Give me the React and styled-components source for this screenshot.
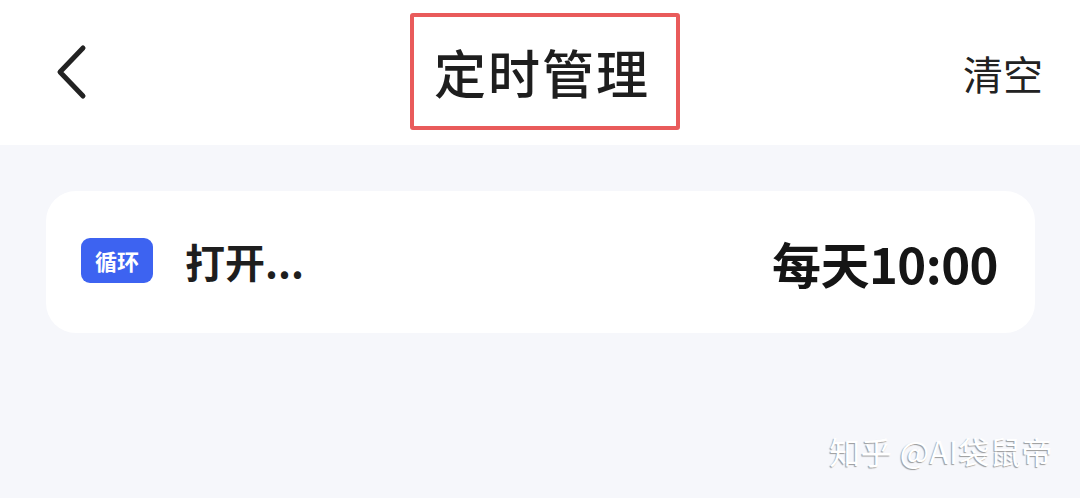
import React from "react";
import styled, { createGlobalStyle } from "styled-components";

const Global = createGlobalStyle`
  html, body { margin: 0; padding: 0; }
  body {
    width: 1080px;
    height: 498px;
    overflow: hidden;
    background: #f6f7fb;
    font-family: "Noto Sans CJK SC", "Noto Sans", sans-serif;
    color: #1f1f1f;
  }
`;

const Page = styled.div`
  position: relative;
  width: 1080px;
  height: 498px;
  background: #f6f7fb;
`;

const Header = styled.header`
  height: 145px;
  background: #fff;
  display: grid;
  grid-template-columns: 1fr auto 1fr;
  align-items: center;
  padding: 0 37px 0 55px;
  box-sizing: border-box;
`;

const Back = styled.button`
  justify-self: start;
  border: 0;
  background: none;
  padding: 0;
  display: flex;
  margin-top: -2px;
`;

const TitleBox = styled.div`
  width: 270px;
  height: 117px;
  box-sizing: border-box;
  border: 4px solid #e95b5b;
  border-radius: 3px;
  display: flex;
  align-items: center;
  padding-left: 20px;
  margin-top: -3px;
  margin-left: -8px;
`;

const Title = styled.h1`
  margin: 0;
  font-size: 52px;
  font-weight: 500;
  letter-spacing: 2px;
  color: #1e1e1e;
  line-height: 1;
  padding-top: 2px;
`;

const Clear = styled.span`
  justify-self: end;
  font-size: 40px;
  color: #222;
  line-height: 1;
`;

const Body = styled.main`
  padding: 46px 45px 0 46px;
`;

const Card = styled.div`
  height: 142px;
  background: #fff;
  border-radius: 30px;
  display: flex;
  align-items: center;
  padding: 0 37px 0 35px;
  box-sizing: border-box;
`;

const Badge = styled.span`
  width: 72px;
  height: 45px;
  border-radius: 9px;
  background: #3d63f1;
  color: #fff;
  font-size: 22px;
  font-weight: 700;
  display: flex;
  align-items: center;
  justify-content: center;
  margin-top: -4px;
`;

const Name = styled.span`
  margin-left: 32px;
  font-size: 40px;
  font-weight: 700;
  color: #1e1e1e;
  margin-top: -2px;
`;

const Time = styled.span`
  margin-left: auto;
  font-size: 49px;
  font-weight: 700;
  color: #151515;
  letter-spacing: -0.5px;
`;

const Watermark = styled.div`
  position: absolute;
  right: 27px;
  bottom: 25px;
  font-size: 31px;
  color: #fff;
  text-shadow: -1px 1px 1px #9a9a9a;
  letter-spacing: 0.5px;
`;

export default function App() {
  return (
    <Page>
      <Global />
      <Header>
        <Back aria-label="返回">
          <svg width="34" height="56" viewBox="0 0 34 56">
            <path
              d="M28 4 L5 28 L28 52"
              fill="none"
              stroke="#222"
              strokeWidth="5"
              strokeLinecap="round"
              strokeLinejoin="round"
            />
          </svg>
        </Back>
        <TitleBox>
          <Title>定时管理</Title>
        </TitleBox>
        <Clear>清空</Clear>
      </Header>
      <Body>
        <Card>
          <Badge>循环</Badge>
          <Name>打开...</Name>
          <Time>每天10:00</Time>
        </Card>
      </Body>
      <Watermark>知乎 @AI袋鼠帝</Watermark>
    </Page>
  );
}
